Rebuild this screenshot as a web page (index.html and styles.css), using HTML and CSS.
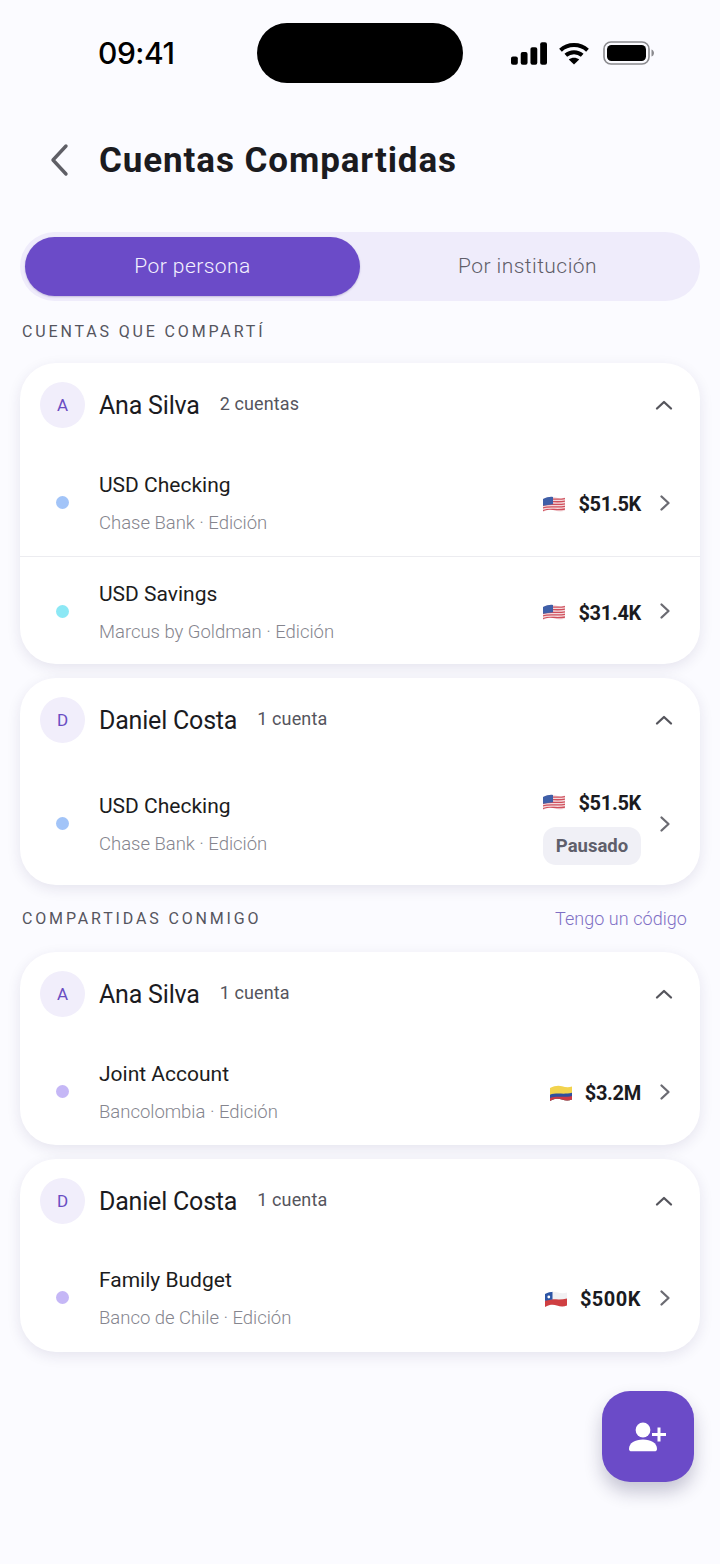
FILE: index.html
```html
<!DOCTYPE html>
<html lang="es">
<head>
<meta charset="utf-8">
<title>Cuentas Compartidas</title>
<link rel="stylesheet" href="styles.css">
</head>
<body>
<svg class="defs" width="0" height="0" aria-hidden="true">
  <defs>
    <clipPath id="wave"><path d="M0 3C4.500 .6 8.500 .2 12 1.200s6.500 1.400 10 .3V14.500c-3.500 1.300-6.500 1.100-10 0S4.500 13.400 0 16Z"/></clipPath>
    <symbol id="flag-us" viewBox="0 0 22 17">
      <g clip-path="url(#wave)">
        <rect width="22" height="17" fill="#f3d9dc"/>
        <path d="M0 4.200C6 1.700 14 4.200 22 2.600M0 6.800C6 4.300 14 6.800 22 5.200M0 9.400C6 6.900 14 9.400 22 7.800M0 12C6 9.500 14 12 22 10.400M0 14.600C6 12.100 14 14.600 22 13" fill="none" stroke="#d0505c" stroke-width="1.300"/>
        <path d="M0 0H10V8.200L0 9.800Z" fill="#3f5fa8"/>
      </g>
    </symbol>
    <symbol id="flag-co" viewBox="0 0 22 17">
      <g clip-path="url(#wave)">
        <rect width="22" height="17" fill="#f2d34e"/>
        <path d="M0 9.800C6 7.300 14 9.800 22 7.800V17H0Z" fill="#2f4f9e"/>
        <path d="M0 13C6 10.500 14 13 22 11V17H0Z" fill="#cc3a45"/>
      </g>
    </symbol>
    <symbol id="flag-cl" viewBox="0 0 22 17">
      <g clip-path="url(#wave)">
        <rect width="22" height="17" fill="#f1f1f3"/>
        <path d="M0 9.500C6 7 14 9.500 22 7.600V17H0Z" fill="#cf3f42"/>
        <path d="M0 0H7.500V8.600L0 9.800Z" fill="#2c55a5"/>
        <circle cx="3.800" cy="6" r="1.400" fill="#fff"/>
      </g>
    </symbol>
    <symbol id="chev-right" viewBox="0 0 12 18">
      <path d="M2.500 2.500 9.500 9l-7 6.500" fill="none" stroke="#6b6b72" stroke-width="2.300" stroke-linecap="round" stroke-linejoin="round"/>
    </symbol>
    <symbol id="chev-up" viewBox="0 0 18 12">
      <path d="M2 9.500 9 3l7 6.500" fill="none" stroke="#55555c" stroke-width="2.300" stroke-linecap="round" stroke-linejoin="round"/>
    </symbol>
  </defs>
</svg>

<div class="app">
  <div class="status">
    <span class="time">09:41</span>
    <span class="island"></span>
    <span class="status-icons">
      <svg class="sig" width="36" height="23" viewBox="0 0 37 23"><rect x="0" y="14.500" width="7" height="8.500" rx="2"/><rect x="10" y="10" width="7" height="13" rx="2"/><rect x="20" y="5" width="7" height="18" rx="2"/><rect x="30" y="0" width="7" height="23" rx="2"/></svg>
      <svg class="wifi" width="32" height="23" viewBox="0 0 32 23"><path d="M2.500 8.200C9.800 1.400 22.200 1.400 29.500 8.200M7.800 13.300C12.400 9.200 19.600 9.200 24.200 13.300" fill="none" stroke="#000" stroke-width="4"/><path d="M16 22.500 10.800 17.600C13.700 15.200 18.300 15.200 21.200 17.600Z"/></svg>
      <svg class="batt" width="51" height="24" viewBox="0 0 51 24"><rect x="1" y="1" width="45" height="22" rx="7" fill="none" stroke="#8a8a8e" stroke-width="1.600"/><rect x="4" y="4" width="39" height="16" rx="4.500"/><path d="M48.500 8.500c1.600.5 2.500 2 2.500 3.500s-.9 3-2.500 3.500Z" fill="#8a8a8e"/></svg>
    </span>
  </div>

  <header class="head">
    <svg class="back" width="22" height="34" viewBox="0 0 22 34"><path d="M18 3 5 17l13 14" fill="none" stroke="#5f5f66" stroke-width="3.400" stroke-linecap="round" stroke-linejoin="round"/></svg>
    <h1 class="title">Cuentas Compartidas</h1>
  </header>

  <div class="tabs">
    <div class="tab tab-on">Por persona</div>
    <div class="tab">Por institución</div>
  </div>

  <div class="label label-first">CUENTAS QUE COMPARTÍ</div>

  <section class="card">
    <div class="card-head">
      <span class="avatar">A</span><span class="name">Ana Silva</span><span class="count">2 cuentas</span>
      <svg class="up" width="18" height="12"><use href="#chev-up"/></svg>
    </div>
    <div class="row row-line">
      <span class="dot dot-blue"></span>
      <div class="info"><div class="acct">USD Checking</div><div class="sub">Chase Bank · Edición</div></div>
      <div class="val"><div class="amt-line"><svg class="flag" width="22" height="17"><use href="#flag-us"/></svg><span class="amt">$51.5K</span></div></div>
      <svg class="more" width="12" height="18"><use href="#chev-right"/></svg>
    </div>
    <div class="row row-last">
      <span class="dot dot-cyan"></span>
      <div class="info"><div class="acct">USD Savings</div><div class="sub">Marcus by Goldman · Edición</div></div>
      <div class="val"><div class="amt-line"><svg class="flag" width="22" height="17"><use href="#flag-us"/></svg><span class="amt">$31.4K</span></div></div>
      <svg class="more" width="12" height="18"><use href="#chev-right"/></svg>
    </div>
  </section>

  <section class="card">
    <div class="card-head">
      <span class="avatar">D</span><span class="name">Daniel Costa</span><span class="count">1 cuenta</span>
      <svg class="up" width="18" height="12"><use href="#chev-up"/></svg>
    </div>
    <div class="row row-tall">
      <span class="dot dot-blue"></span>
      <div class="info"><div class="acct">USD Checking</div><div class="sub">Chase Bank · Edición</div></div>
      <div class="val"><div class="amt-line"><svg class="flag" width="22" height="17"><use href="#flag-us"/></svg><span class="amt">$51.5K</span></div><span class="pill">Pausado</span></div>
      <svg class="more" width="12" height="18"><use href="#chev-right"/></svg>
    </div>
  </section>

  <div class="label-row">
    <div class="label">COMPARTIDAS CONMIGO</div>
    <div class="code">Tengo un código</div>
  </div>

  <section class="card">
    <div class="card-head">
      <span class="avatar">A</span><span class="name">Ana Silva</span><span class="count">1 cuenta</span>
      <svg class="up" width="18" height="12"><use href="#chev-up"/></svg>
    </div>
    <div class="row row-short row-nudge">
      <span class="dot dot-violet"></span>
      <div class="info"><div class="acct">Joint Account</div><div class="sub">Bancolombia · Edición</div></div>
      <div class="val"><div class="amt-line"><svg class="flag" width="22" height="17"><use href="#flag-co"/></svg><span class="amt">$3.2M</span></div></div>
      <svg class="more" width="12" height="18"><use href="#chev-right"/></svg>
    </div>
  </section>

  <section class="card">
    <div class="card-head">
      <span class="avatar">D</span><span class="name">Daniel Costa</span><span class="count">1 cuenta</span>
      <svg class="up" width="18" height="12"><use href="#chev-up"/></svg>
    </div>
    <div class="row row-short">
      <span class="dot dot-violet"></span>
      <div class="info"><div class="acct">Family Budget</div><div class="sub">Banco de Chile · Edición</div></div>
      <div class="val"><div class="amt-line"><svg class="flag" width="22" height="17"><use href="#flag-cl"/></svg><span class="amt amt-wide">$500K</span></div></div>
      <svg class="more" width="12" height="18"><use href="#chev-right"/></svg>
    </div>
  </section>

  <button class="fab" aria-label="Invitar">
    <svg width="38" height="30" viewBox="0 0 38 30" fill="#fff"><circle cx="14" cy="8" r="7.400"/><path d="M0 27c0-6 6-9.500 14-9.500S28 21 28 27c0 1.400-1 2.300-2.400 2.300H2.400C1 29.300 0 28.400 0 27Z"/><path d="M28.500 5.500h3v5.500H37v3h-5.500v5.500h-3V14H23v-3h5.500Z"/></svg>
  </button>
</div>
</body>
</html>
```

FILE: styles.css
```css
* { box-sizing: border-box; }
html, body { margin: 0; padding: 0; }
body {
  background: #fbfbff;
  font-family: Roboto, "Liberation Sans", sans-serif;
  color: #17171b;
}
.defs { position: absolute; }
.app { position: relative; width: 720px; height: 1564px; padding: 0 20px; overflow: hidden; }

.status { position: relative; height: 106px; margin: 0 -20px; }
.time {
  position: absolute; left: 98px; top: 35px;
  font: 500 30px/36px Inter, sans-serif; color: #000; letter-spacing: -.45px;
}
.island { position: absolute; left: 257px; top: 23px; width: 206px; height: 60px; border-radius: 30px; background: #000; }
.status-icons { position: absolute; left: 511px; top: 41px; display: flex; align-items: center; gap: 11px; }
.batt { margin-left: 2px; }

.head { display: flex; align-items: center; height: 108px; margin-left: 28px; }
.back { flex: none; margin-right: 29px; }
.title { margin: 0; font-size: 35px; font-weight: 700; letter-spacing: .9px; color: #1b1b1f; }

.tabs {
  display: flex; height: 69px; padding: 5px; margin-top: 18px;
  background: #efecfb; border-radius: 35px;
}
.tab {
  flex: 1; display: flex; align-items: center; justify-content: center;
  padding-bottom: 2px;
  border-radius: 30px; font-size: 21px; font-weight: 300; letter-spacing: .45px; color: #5f5e69;
}
.tab-on { background: #6b4bc8; color: #f4f1ff; box-shadow: 0 1px 2px rgba(60, 40, 130, .25); }

.label { font-size: 16px; font-weight: 400; letter-spacing: 2.85px; color: #55555e; line-height: 20px; }
.label-first { margin: 21px 0 21px 2px; }
.label-row { display: flex; justify-content: space-between; align-items: center; margin: 24px 13px 23px 2px; height: 20px; }
.code { margin-bottom: 2px; font-size: 18px; font-weight: 300; color: #7f6fc4; letter-spacing: .05px; }

.card {
  background: #fff; border-radius: 36px; margin-bottom: 14px;
  box-shadow: 0 4px 14px rgba(40, 30, 90, .1);
}
.card-head { display: flex; align-items: center; height: 84px; padding: 0 27px 0 20px; }
.avatar {
  flex: none; width: 45px; height: 46px; border-radius: 50%;
  display: flex; align-items: center; justify-content: center;
  background: #f1eefb; color: #6a4cc2; font-size: 17px;
}
.name { margin-left: 14px; font-size: 25px; letter-spacing: -.2px; color: #1b1b1f; }
.count { margin: 0 0 3px 20px; font-size: 18px; letter-spacing: .12px; color: #55555d; }
.up { margin-left: auto; }

.row { display: flex; align-items: center; height: 108px; padding: 0 29px 0 36px; }
.row-line { border-bottom: 1px solid #ececf0; height: 110px; padding-top: 2px; }
.row-last { height: 107px; padding-top: 1px; }
.row-tall { height: 123px; }
.row-short { height: 109px; }
.row-nudge { padding-top: 2px; }
.dot { flex: none; width: 13px; height: 13px; border-radius: 50%; margin-right: 30px; }
.dot-blue { background: #a2c4f8; }
.dot-cyan { background: #8ce8f5; }
.dot-violet { background: #c5b7f6; }
.info { flex: 1; display: flex; flex-direction: column; gap: 13px; margin-top: 4px; }
.acct { font-size: 21px; line-height: 25px; letter-spacing: 0; color: #1c1c20; }
.sub { font-size: 18.500px; line-height: 25px; font-weight: 300; letter-spacing: -.02px; color: #85858e; }
.val { display: flex; flex-direction: column; align-items: flex-end; gap: 12px; margin: 3px 18px 0 0; }
.row-tall .val { margin-top: 8px; }
.amt-line { display: flex; align-items: center; gap: 13px; }
.flag { flex: none; }
.amt { font-size: 20px; font-weight: 700; letter-spacing: -.3px; color: #1b1b1f; }
.amt-wide { letter-spacing: .5px; }
.pill {
  display: block; height: 38px; width: 98px; line-height: 38px; text-align: center;
  border-radius: 13px; background: #f0f0f6; color: #5f5f6b;
  font-size: 18.500px; font-weight: 700; letter-spacing: 0;
}
.more { flex: none; }

.fab {
  position: absolute; left: 602px; top: 1391px; width: 92px; height: 91px;
  display: flex; align-items: center; justify-content: center; padding: 0;
  border: 0; border-radius: 28px; background: #6b4bc8;
  box-shadow: 0 10px 18px rgba(30, 25, 70, .24);
}
```
